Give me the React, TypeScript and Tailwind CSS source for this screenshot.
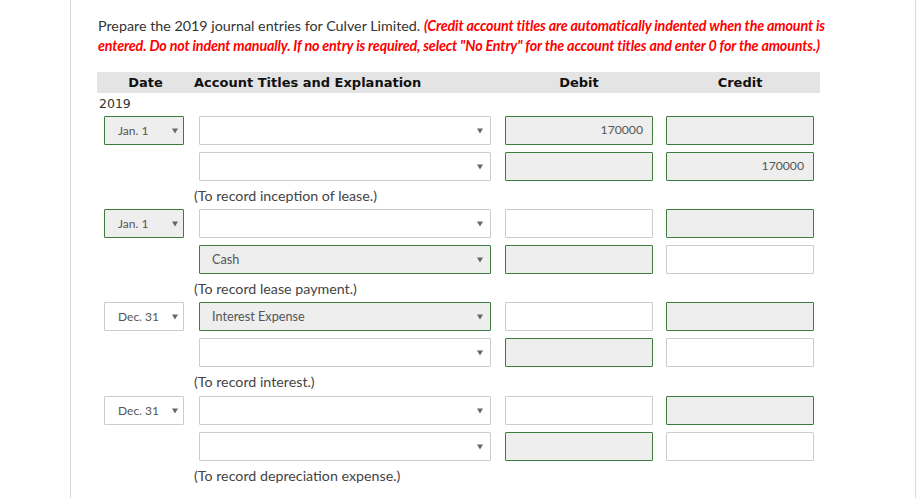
import React from "react";

type Cell = { v?: string; g?: boolean };
type Row = { date?: Cell; acct: Cell; debit: Cell; credit: Cell };
type Group = { rows: Row[]; caption: string; gapAfter: string };

const Arrow = () => (
  <svg width="6" height="6" viewBox="0 0 6 6" className="shrink-0">
    <path d="M0 0.5 L6 0.5 L3 5.5 Z" fill="#666" />
  </svg>
);

const box = (g?: boolean) =>
  g
    ? "border border-[#3e7b3e] bg-[#eeeeee]"
    : "border border-[#cccccc] bg-white";

function DateSel({ c }: { c: Cell }) {
  return (
    <div
      className={`${box(c.g)} w-[80px] h-[29px] flex items-center justify-between pl-[13px] pr-[5px] text-[12px] text-[#555] rounded-[1px]`}
    >
      <span>{c.v}</span>
      <Arrow />
    </div>
  );
}

function AcctSel({ c }: { c: Cell }) {
  return (
    <div
      className={`${box(c.g)} w-[292px] h-[29px] flex items-center justify-between pl-[12px] pr-[7px] text-[12.7px] text-[#555] rounded-[1px]`}
    >
      <span>{c.v ?? ""}</span>
      <Arrow />
    </div>
  );
}

function Amt({ c }: { c: Cell }) {
  return (
    <div
      className={`${box(c.g)} w-[148px] h-[29px] flex items-center justify-end pr-[9px] text-[12.2px] text-[#555] rounded-[1px]`}
    >
      {c.v ?? ""}
    </div>
  );
}

const groups: Group[] = [
  {
    rows: [
      { date: { v: "Jan. 1", g: true }, acct: {}, debit: { v: "170000", g: true }, credit: { g: true } },
      { acct: {}, debit: { g: true }, credit: { v: "170000", g: true } },
    ],
    caption: "(To record inception of lease.)",
    gapAfter: "mb-[3px]",
  },
  {
    rows: [
      { date: { v: "Jan. 1", g: true }, acct: {}, debit: {}, credit: { g: true } },
      { acct: { v: "Cash", g: true }, debit: { g: true }, credit: {} },
    ],
    caption: "(To record lease payment.)",
    gapAfter: "mb-[3px]",
  },
  {
    rows: [
      { date: { v: "Dec. 31" }, acct: { v: "Interest Expense", g: true }, debit: {}, credit: { g: true } },
      { acct: {}, debit: { g: true }, credit: {} },
    ],
    caption: "(To record interest.)",
    gapAfter: "mb-[4px]",
  },
  {
    rows: [
      { date: { v: "Dec. 31" }, acct: {}, debit: {}, credit: { g: true } },
      { acct: {}, debit: { g: true }, credit: {} },
    ],
    caption: "(To record depreciation expense.)",
    gapAfter: "mb-0",
  },
];

export default function App() {
  return (
    <div className="w-[919px] h-[498px] bg-white overflow-hidden font-['Lato',sans-serif]">
      <div className="ml-[70px] w-[846px] h-full border-l border-r border-[#d9d9d9] pl-[26px] pt-[16px]">
        <p className="w-[735px] text-[14.3px] leading-[20px] text-[#333] pl-[1px]">
          Prepare the 2019 journal entries for Culver Limited.{" "}
          <span className="text-[#ff0000] font-bold italic tracking-[-0.15px]">
            (Credit account titles are automatically indented when the amount is
            entered. Do not indent manually. If no entry is required, select "No
            Entry" for the account titles and enter 0 for the amounts.)
          </span>
        </p>

        <div className="mt-[16px] w-[723px] h-[21px] bg-[#e4e4e4] flex items-center font-['DejaVu_Sans',sans-serif] font-bold text-[13px] text-[#111]">
          <div className="w-[97px] text-center">Date</div>
          <div className="w-[311px]">Account Titles and Explanation</div>
          <div className="w-[148px] text-center">Debit</div>
          <div className="w-[148px] ml-[13px] text-center">Credit</div>
        </div>
        <div className="pt-[1px] mb-[3px] h-[20px] leading-[20px] font-['DejaVu_Sans',sans-serif] text-[12.5px] text-[#333] pl-[2px]">
          2019
        </div>

        {groups.map((g, gi) => (
          <div key={gi} className={g.gapAfter}>
            <div className="flex flex-col gap-[7px]">
              {g.rows.map((r, ri) => (
                <div key={ri} className="flex items-center">
                  <div className="w-[97px] pl-[7px]">
                    {r.date ? <DateSel c={r.date} /> : null}
                  </div>
                  <div className="w-[311px] pl-[5px]">
                    <AcctSel c={r.acct} />
                  </div>
                  <div>
                    <Amt c={r.debit} />
                  </div>
                  <div className="ml-[13px]">
                    <Amt c={r.credit} />
                  </div>
                </div>
              ))}
            </div>
            <div className="mt-[5px] ml-[97px] h-[20px] leading-[20px] text-[14.25px] text-[#444]">
              {g.caption}
            </div>
          </div>
        ))}
      </div>
    </div>
  );
}
